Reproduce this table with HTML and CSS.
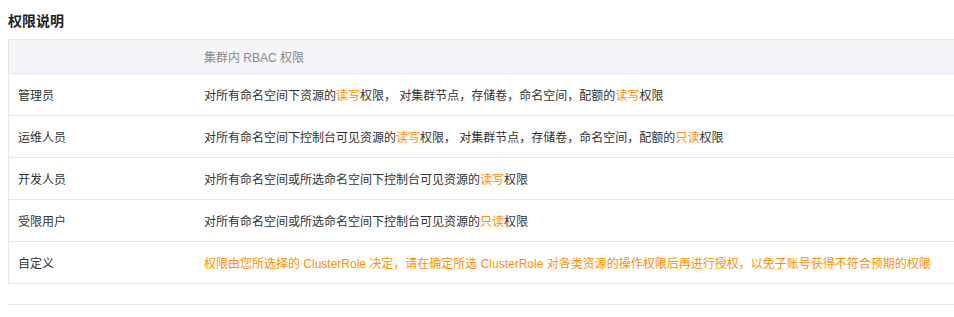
FILE: index.html
```html
<!DOCTYPE html>
<html lang="zh">
<head>
<meta charset="utf-8">
<link rel="stylesheet" href="styles.css">
</head>
<body>
<div class="page">
  <h3 class="title">权限说明</h3>
  <table class="perm">
    <thead>
      <tr><th class="c1"></th><th>集群内 RBAC 权限</th></tr>
    </thead>
    <tbody>
      <tr><td class="c1">管理员</td><td>对所有命名空间下资源的<span class="hl">读写</span>权限， 对集群节点，存储卷，命名空间，配额的<span class="hl">读写</span>权限</td></tr>
      <tr><td class="c1">运维人员</td><td>对所有命名空间下控制台可见资源的<span class="hl">读写</span>权限， 对集群节点，存储卷，命名空间，配额的<span class="hl">只读</span>权限</td></tr>
      <tr><td class="c1">开发人员</td><td>对所有命名空间或所选命名空间下控制台可见资源的<span class="hl">读写</span>权限</td></tr>
      <tr><td class="c1">受限用户</td><td>对所有命名空间或所选命名空间下控制台可见资源的<span class="hl">只读</span>权限</td></tr>
      <tr><td class="c1">自定义</td><td class="hl">权限由您所选择的 ClusterRole 决定，请在确定所选 ClusterRole 对各类资源的操作权限后再进行授权，以免子账号获得不符合预期的权限</td></tr>
    </tbody>
  </table>
  <div class="divider"></div>
</div>
</body>
</html>
```
FILE: styles.css
```css
html, body {
  margin: 0;
  padding: 0;
  overflow: hidden;
  background: #fff;
}
body {
  font-family: "Liberation Sans", "Noto Sans CJK SC", sans-serif;
  font-size: 12px;
  color: #333;
}
.page {
  padding: 0 0 0 8px;
  width: 980px;
}
.title {
  margin: 0;
  font-size: 14px;
  font-weight: bold;
  color: #222;
  line-height: 20px;
  padding-top: 11px;
  height: 39px;
  box-sizing: border-box;
}
.perm {
  border-collapse: collapse;
  width: 972px;
  border: 1px solid #e5e6eb;
}
.perm th {
  background: #f4f5f9;
  color: #888;
  font-weight: normal;
  text-align: left;
  height: 33px;
  padding: 0 10px 0 10px;
  border-bottom: 1px solid #e5e6eb;
}
.perm td {
  height: 41px;
  padding: 0 10px;
  border-bottom: 1px solid #e5e6eb;
  white-space: nowrap;
}
.perm .c1 {
  width: 166px;
  padding-left: 9px;
}
.hl {
  color: #ff9000;
}
.divider {
  margin-top: 20px;
  border-top: 1px solid #e5e6eb;
}
```
